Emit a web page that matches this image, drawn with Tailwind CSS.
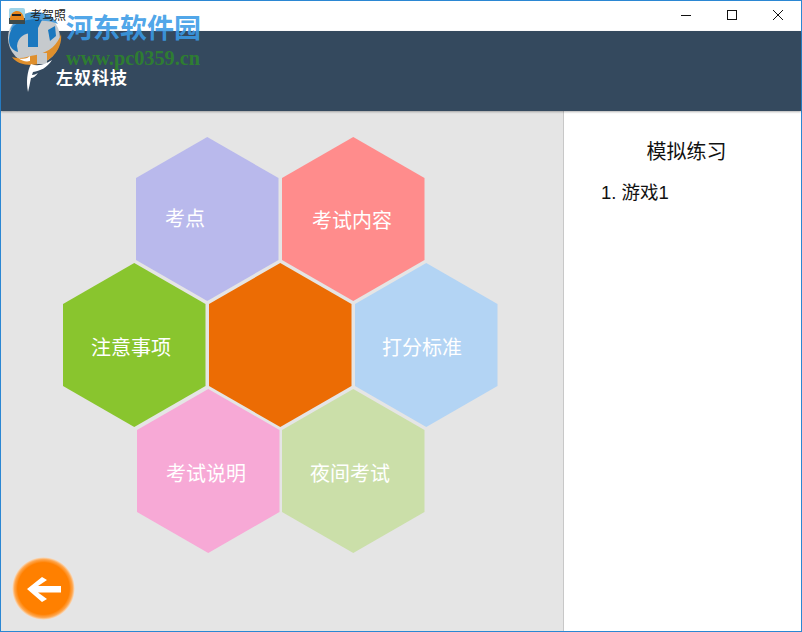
<!DOCTYPE html>
<html lang="zh">
<head>
    <meta charset="UTF-8">
    <meta name="viewport" content="width=device-width, initial-scale=1.0">
    <script src="https://cdn.jsdelivr.net/npm/@tailwindcss/browser@4"></script>
    <title>考驾照</title>
</head>
<body class="bg-white overflow-hidden">
    <div class="relative w-[802px] h-[632px] flex flex-col border border-[#2b87d3] font-['Liberation_Sans','Noto_Sans_CJK_SC',sans-serif]">

        <!-- title bar -->
        <div class="h-[30px] shrink-0 flex items-center bg-white pl-2">
            <svg class="relative z-30 w-4 h-4" viewBox="0 0 16 16">
                <rect width="16" height="16" rx="2" fill="#9fd4e8"/>
                <rect y="10" width="16" height="6" fill="#3d4a4c"/>
                <path d="M1 10 C2 5 5 3 8 3 C12 3 14 6 15 10 L15 12 L1 12 Z" fill="#e8861c"/>
                <rect x="3" y="6" width="9" height="2" fill="#222"/>
            </svg>
            <span class="relative z-30 ml-[5px] text-xs text-[#222]">考驾照</span>
            <div class="ml-auto flex items-center text-black">
                <svg class="w-[46px] h-[30px]" viewBox="0 0 46 30"><path d="M18 14.5H28" stroke="#111" fill="none"/></svg>
                <svg class="w-[46px] h-[30px]" viewBox="0 0 46 30"><rect x="18.5" y="9.5" width="9" height="9" stroke="#111" fill="none"/></svg>
                <svg class="w-[46px] h-[30px]" viewBox="0 0 46 30"><path d="M18 9L28 19M28 9L18 19" stroke="#111" fill="none"/></svg>
            </div>
        </div>

        <!-- header -->
        <div class="h-[80px] shrink-0 bg-[#34495e] shadow-[0_1px_2px_rgba(0,0,0,0.3)] z-10 pl-[55px] pt-[36px]">
            <span class="text-[17px] leading-[22px] font-bold tracking-[1px] text-white font-['Liberation_Serif','Noto_Sans_CJK_SC',serif]">左奴科技</span>
        </div>

        <div class="flex flex-1 min-h-0">
            <!-- hexagons -->
            <div class="relative w-[563px] bg-[#e5e5e5] border-r border-[#c8c8c8]">
                <div class="absolute left-[135px] top-[26px] w-[142.5px] h-[164px] pl-[29px] flex items-center text-[20px] text-white bg-[#b9b9ec] [clip-path:polygon(50%_0,100%_25%,100%_75%,50%_100%,0_75%,0_25%)]">考点</div>
                <div class="absolute left-[281px] top-[26px] w-[142.5px] h-[164px] pl-[30px] pt-[4px] flex items-center text-[20px] text-white bg-[#ff8c8c] [clip-path:polygon(50%_0,100%_25%,100%_75%,50%_100%,0_75%,0_25%)]">考试内容</div>
                <div class="absolute left-[62px] top-[152px] w-[142.5px] h-[164px] pl-[28px] pt-[6px] flex items-center text-[20px] text-white bg-[#89c52e] [clip-path:polygon(50%_0,100%_25%,100%_75%,50%_100%,0_75%,0_25%)]">注意事项</div>
                <div class="absolute left-[208px] top-[152px] w-[142.5px] h-[164px] bg-[#ec6c04] [clip-path:polygon(50%_0,100%_25%,100%_75%,50%_100%,0_75%,0_25%)]"></div>
                <div class="absolute left-[354px] top-[152px] w-[142.5px] h-[164px] pl-[27px] pt-[6px] flex items-center text-[20px] text-white bg-[#b3d4f4] [clip-path:polygon(50%_0,100%_25%,100%_75%,50%_100%,0_75%,0_25%)]">打分标准</div>
                <div class="absolute left-[136px] top-[278px] w-[142.5px] h-[164px] pl-[29px] pt-[6px] flex items-center text-[20px] text-white bg-[#f7a9d6] [clip-path:polygon(50%_0,100%_25%,100%_75%,50%_100%,0_75%,0_25%)]">考试说明</div>
                <div class="absolute left-[281px] top-[278px] w-[142.5px] h-[164px] pl-[28px] pt-[6px] flex items-center text-[20px] text-white bg-[#cbdfa9] [clip-path:polygon(50%_0,100%_25%,100%_75%,50%_100%,0_75%,0_25%)]">夜间考试</div>

                <!-- back button -->
                <button class="absolute left-[11px] top-[446px] w-[63px] h-[63px] rounded-full flex items-center justify-center bg-[radial-gradient(circle_closest-side,#ff8000_0%,#ff8000_82%,#ffa64d_92%,#f6d9bd_98%,#e5e5e5_100%)]">
                    <svg class="w-[36px] h-[28px]" viewBox="0 0 36 28">
                        <path d="M1 14L16 2L21 5L12 11H35V17.5H12L21 24L16 27Z" fill="#fff"/>
                    </svg>
                </button>
            </div>

            <!-- side list -->
            <div class="flex-1 bg-white">
                <div class="mt-[29px] h-[24px] leading-[24px] text-center text-[20px] text-[#111] pl-[8px]">模拟练习</div>
                <div class="mt-[17px] pl-[37px] h-[24px] leading-[24px] text-[18.5px] text-[#111]">1. 游戏1</div>
            </div>
        </div>

        <!-- watermark logo, sits over the title bar and header -->
        <svg class="absolute left-0 top-0 w-[70px] h-[98px] z-20" viewBox="1 1 70 98">
            <circle cx="34" cy="38" r="26" fill="#c6cacd"/>
            <path d="M10 30 A27 27 0 0 1 58 24 C46 18 24 20 10 30 Z" fill="#4f9edb"/>
            <path d="M9 40 C9 34 11 28 15 25 C22 20 34 18 42 20 L38 28 L33 28 L33 33 C24 33 18 37 17 46 L18 52 C12 50 9 46 9 40 Z" fill="#1b78bf"/>
            <rect x="28" y="28" width="10" height="19" fill="#1b78bf"/>
            <path d="M48 30 L55 26 L56 36 L50 41 Z" fill="#1b78bf"/>
            <path d="M61 34 C63 50 49 65 31 65 C23 65 15 62 12 57 C22 60 28 56 36 55 C50 52 58 44 61 34 Z" fill="#df8f2c"/>
            <path d="M37 53 H47 V64 H37 Z" fill="#c6cacd"/>
            <path d="M18 58 C24 60 28 58 30 56 L30 61 C26 62 22 61 18 58 Z" fill="#fff"/>
            <path d="M28 92 C26 82 27 72 31 64 C38 67 46 64 52 60 C47 68 40 71 33 72 L32 75 C34 75 36 74 38 73 C36 76 33 78 31 78 C30 83 29 88 28 92 Z" fill="#fff"/>
        </svg>
        <div class="absolute left-[65px] top-[12px] z-20 text-[27px] leading-[32px] font-bold text-[#3a9be6]/90 font-['Liberation_Serif','Noto_Sans_CJK_SC',serif]">河东软件园</div>
        <div class="absolute left-[65px] top-[46px] z-20 text-[20.3px] leading-[22px] font-bold text-[#2e7d32] font-['Liberation_Serif',serif]">www.pc0359.cn</div>
    </div>
</body>
</html>
